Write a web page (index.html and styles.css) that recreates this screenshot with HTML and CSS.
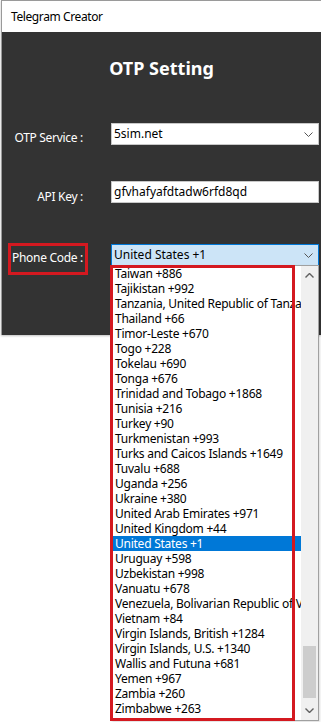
FILE: index.html
```html
<!DOCTYPE html>
<html lang="en">
<head>
    <meta charset="UTF-8">
    <meta name="viewport" content="width=device-width, initial-scale=1.0">
    <title>Telegram Creator</title>
    <link rel="stylesheet" href="styles.css">
</head>
<body>
    <div class="window">
        <div class="titlebar">Telegram Creator</div>
        <div class="panel">
            <h1 class="heading">OTP Setting</h1>

            <div class="row row-service">
                <div class="label">OTP Service :</div>
                <div class="field combo">
                    <span>5sim.net</span>
                    <svg class="chevron" width="9" height="5" viewBox="0 0 9 5"><path d="M0.5 0.5 L4.5 4.5 L8.5 0.5" fill="none" stroke="#555" stroke-width="1"/></svg>
                </div>
            </div>

            <div class="row row-key">
                <div class="label">API Key :</div>
                <div class="field">gfvhafyafdtadw6rfd8qd</div>
            </div>

            <div class="row row-phone">
                <div class="label label-marked">Phone Code :</div>
                <div class="field combo combo-open">
                    <span>United States +1</span>
                    <svg class="chevron" width="9" height="5" viewBox="0 0 9 5"><path d="M0.5 0.5 L4.5 4.5 L8.5 0.5" fill="none" stroke="#555" stroke-width="1"/></svg>

                    <div class="dropdown">
                        <ul class="options" id="options"></ul>
                        <div class="scrollbar">
                            <svg class="scroll-arrow" width="9" height="5" viewBox="0 0 9 5"><path d="M0.5 4.5 L4.5 0.5 L8.5 4.5" fill="none" stroke="#606060" stroke-width="1.4"/></svg>
                            <div class="track"><div class="thumb"></div></div>
                            <svg class="scroll-arrow" width="9" height="5" viewBox="0 0 9 5"><path d="M0.5 0.5 L4.5 4.5 L8.5 0.5" fill="none" stroke="#606060" stroke-width="1.4"/></svg>
                        </div>
                        <div class="mark-list"></div>
                    </div>
                </div>
            </div>
        </div>
    </div>

    <script>
        const countries = [
            'Taiwan +886', 'Tajikistan +992', 'Tanzania, United Republic of Tanzania +255',
            'Thailand +66', 'Timor-Leste +670', 'Togo +228', 'Tokelau +690', 'Tonga +676',
            'Trinidad and Tobago +1868', 'Tunisia +216', 'Turkey +90', 'Turkmenistan +993',
            'Turks and Caicos Islands +1649', 'Tuvalu +688', 'Uganda +256', 'Ukraine +380',
            'United Arab Emirates +971', 'United Kingdom +44', 'United States +1',
            'Uruguay +598', 'Uzbekistan +998', 'Vanuatu +678',
            'Venezuela, Bolivarian Republic of Venezuela +58', 'Vietnam +84',
            'Virgin Islands, British +1284', 'Virgin Islands, U.S. +1340',
            'Wallis and Futuna +681', 'Yemen +967', 'Zambia +260', 'Zimbabwe +263'
        ];

        const list = document.getElementById('options');
        countries.forEach(function (name) {
            const li = document.createElement('li');
            li.textContent = name;
            if (name === 'United States +1') {
                li.className = 'selected';
            }
            list.appendChild(li);
        });
    </script>
</body>
</html>
```

FILE: styles.css
```css
html,
body {
    min-height: 100%;
}

body {
    margin: 0;
    min-height: 722px;
    background-color: #ffffff;
    font-family: "Noto Sans", "Open Sans", sans-serif;
    font-size: 12px;
}

.window {
    margin-left: 1px;
    border-top: 1px solid #9a9a9a;
    border-left: 1px solid #9a9a9a;
    box-shadow: 0 1px 2px rgba(0, 0, 0, 0.25);
}

.titlebar {
    height: 31px;
    line-height: 31px;
    padding-left: 9px;
    background-color: #ffffff;
    color: #000000;
    letter-spacing: -0.4px;
}

.panel {
    height: 303px;
    background-color: #333333;
    padding-top: 24px;
    box-sizing: border-box;
    color: #ffffff;
}

.heading {
    margin: 0;
    text-align: center;
    font-size: 18px;
    line-height: 24px;
    font-weight: bold;
    padding-left: 0;
}

.row {
    display: flex;
    align-items: flex-start;
}

.row-service {
    margin-top: 43px;
}

.row-key {
    margin-top: 35px;
}

.row-phone {
    margin-top: 39px;
}

.label {
    width: 81px;
    text-align: right;
    padding-top: 6px;
    font-size: 12px;
    letter-spacing: -0.3px;
}

.row-key .label {
    padding-top: 7px;
}

.label-marked {
    position: relative;
    padding-top: 5px;
}

.label-marked::after {
    content: "";
    position: absolute;
    left: 6px;
    right: -5px;
    top: -1px;
    height: 32px;
    border: 3px solid #d41920;
    box-sizing: border-box;
}

.field {
    margin-left: 28px;
    width: 208px;
    height: 22px;
    line-height: 20px;
    padding-left: 2px;
    box-sizing: border-box;
    background-color: #ffffff;
    border: 1px solid #c8c8c8;
    color: #000000;
    font-size: 12px;
}

.combo {
    position: relative;
    display: flex;
    align-items: center;
    justify-content: space-between;
    padding-right: 5px;
}

.combo-open {
    background-color: #cce4f7;
    border: 1px solid #0078d7;
    height: 22px;
}

.chevron {
    display: block;
}

.dropdown {
    position: absolute;
    top: 20px;
    left: -1px;
    width: 208px;
    height: 456px;
    background-color: #ffffff;
    border: 1px solid #a0a0a0;
    box-sizing: border-box;
    display: flex;
    box-shadow: 1px 1px 2px rgba(0, 0, 0, 0.15);
    z-index: 2;
}

.options {
    list-style-type: none;
    margin: 0;
    padding: 0 0 0 1px;
    flex: 1;
    overflow: hidden;
}

.options li {
    height: 15px;
    line-height: 15px;
    padding-left: 2px;
    white-space: nowrap;
    color: #000000;
    letter-spacing: -0.25px;
}

.options li.selected {
    background-color: #0078d7;
    color: #ffffff;
}

.scrollbar {
    width: 17px;
    background-color: #f0f0f0;
    display: flex;
    flex-direction: column;
    align-items: center;
}

.scroll-arrow {
    margin: 7px 0;
}

.track {
    flex: 1;
    width: 100%;
    display: flex;
    flex-direction: column;
    justify-content: flex-end;
}

.thumb {
    height: 52px;
    margin: 0 2px 3px 2px;
    background-color: #cdcdcd;
}

.mark-list {
    position: absolute;
    left: -2px;
    top: -1px;
    width: 185px;
    height: 456px;
    border: 3px solid #d41920;
    box-sizing: border-box;
}
```
